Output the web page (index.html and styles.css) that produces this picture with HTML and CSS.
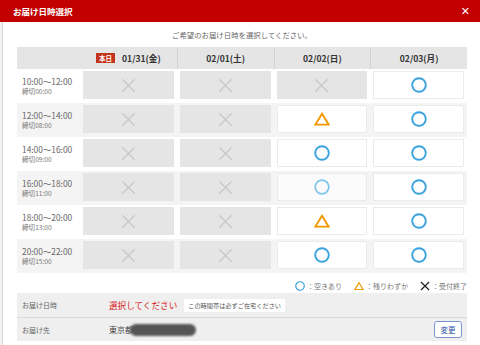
FILE: index.html
```html
<!DOCTYPE html>
<html lang="ja">
<head>
    <meta charset="UTF-8">
    <title>お届け日時選択</title>
    <link rel="stylesheet" href="styles.css">
</head>
<body>
    <svg class="defs" width="0" height="0">
        <symbol id="ic-x" viewBox="0 0 16 16"><path d="M1.5 1.5L14.5 14.5M14.5 1.5L1.5 14.5" stroke="#c4c4c4" stroke-width="1.4" fill="none"/></symbol>
        <symbol id="ic-o" viewBox="0 0 16 16"><circle cx="8" cy="8" r="6.8" fill="none" stroke="#3aa2de" stroke-width="1.9"/></symbol>
        <symbol id="ic-o-light" viewBox="0 0 16 16"><circle cx="8" cy="8" r="6.8" fill="none" stroke="#7fc4e9" stroke-width="1.7"/></symbol>
        <symbol id="ic-t" viewBox="0 0 16 14"><path d="M8 1.8L14.6 12.6H1.4Z" fill="none" stroke="#f39800" stroke-width="1.9"/></symbol>
        <symbol id="ic-x-black" viewBox="0 0 16 16"><path d="M1.5 1.5L14.5 14.5M14.5 1.5L1.5 14.5" stroke="#222" stroke-width="2" fill="none"/></symbol>
    </svg>

    <div class="titlebar">
        <span class="title">お届け日時選択</span>
        <span class="close">✕</span>
    </div>

    <div class="modal">
        <p class="lead">ご希望のお届け日時を選択してください。</p>

        <div class="grid head">
            <div class="th"></div>
            <div class="th date"><span class="today">本日</span>01/31(金)</div>
            <div class="th date sep">02/01(土)</div>
            <div class="th date sep">02/02(日)</div>
            <div class="th date sep">02/03(月)</div>
        </div>

        <div class="grid row">
            <div class="time"><span>10:00～12:00</span><small>締切00:00</small></div>
            <div class="slot off"><svg class="x"><use href="#ic-x"/></svg></div>
            <div class="slot off"><svg class="x"><use href="#ic-x"/></svg></div>
            <div class="slot off"><svg class="x"><use href="#ic-x"/></svg></div>
            <div class="slot"><svg class="o"><use href="#ic-o"/></svg></div>
        </div>
        <div class="grid row alt">
            <div class="time"><span>12:00～14:00</span><small>締切08:00</small></div>
            <div class="slot off"><svg class="x"><use href="#ic-x"/></svg></div>
            <div class="slot off"><svg class="x"><use href="#ic-x"/></svg></div>
            <div class="slot"><svg class="t"><use href="#ic-t"/></svg></div>
            <div class="slot"><svg class="o"><use href="#ic-o"/></svg></div>
        </div>
        <div class="grid row">
            <div class="time"><span>14:00～16:00</span><small>締切09:00</small></div>
            <div class="slot off"><svg class="x"><use href="#ic-x"/></svg></div>
            <div class="slot off"><svg class="x"><use href="#ic-x"/></svg></div>
            <div class="slot"><svg class="o"><use href="#ic-o"/></svg></div>
            <div class="slot"><svg class="o"><use href="#ic-o"/></svg></div>
        </div>
        <div class="grid row alt">
            <div class="time"><span>16:00～18:00</span><small>締切11:00</small></div>
            <div class="slot off"><svg class="x"><use href="#ic-x"/></svg></div>
            <div class="slot off"><svg class="x"><use href="#ic-x"/></svg></div>
            <div class="slot hover"><svg class="o"><use href="#ic-o-light"/></svg></div>
            <div class="slot"><svg class="o"><use href="#ic-o"/></svg></div>
        </div>
        <div class="grid row">
            <div class="time"><span>18:00～20:00</span><small>締切13:00</small></div>
            <div class="slot off"><svg class="x"><use href="#ic-x"/></svg></div>
            <div class="slot off"><svg class="x"><use href="#ic-x"/></svg></div>
            <div class="slot"><svg class="t"><use href="#ic-t"/></svg></div>
            <div class="slot"><svg class="o"><use href="#ic-o"/></svg></div>
        </div>
        <div class="grid row alt">
            <div class="time"><span>20:00～22:00</span><small>締切15:00</small></div>
            <div class="slot off"><svg class="x"><use href="#ic-x"/></svg></div>
            <div class="slot off"><svg class="x"><use href="#ic-x"/></svg></div>
            <div class="slot"><svg class="o"><use href="#ic-o"/></svg></div>
            <div class="slot"><svg class="o"><use href="#ic-o"/></svg></div>
        </div>

        <div class="legend">
            <span class="item"><svg class="lg"><use href="#ic-o"/></svg>：空きあり</span>
            <span class="item"><svg class="lg"><use href="#ic-t"/></svg>：残りわずか</span>
            <span class="item"><svg class="lg"><use href="#ic-x-black"/></svg>：受付終了</span>
        </div>

        <div class="info">
            <div class="info-row">
                <div class="label">お届け日時</div>
                <div class="value">
                    <span class="pick">選択してください</span>
                    <span class="note">この時間帯は必ずご在宅ください</span>
                </div>
            </div>
            <div class="info-row">
                <div class="label">お届け先</div>
                <div class="value">
                    <span class="addr">東京都</span><span class="masked"></span>
                    <button class="change">変更</button>
                </div>
            </div>
        </div>
    </div>
</body>
</html>
```

FILE: styles.css
```css
* {
    margin: 0;
    padding: 0;
    box-sizing: border-box;
}

body {
    font-family: "Noto Sans CJK JP", "Noto Sans", sans-serif;
    background-color: #f3f3f3;
    width: 480px;
    height: 345px;
    overflow: hidden;
}

.defs {
    position: absolute;
}

.titlebar {
    height: 22px;
    background-color: #c20000;
    color: #fff;
    display: flex;
    align-items: center;
    justify-content: space-between;
    padding: 0 10px 0 13px;
}

.title {
    font-size: 8.5px;
    font-weight: bold;
}

.close {
    font-size: 11px;
    font-weight: bold;
    font-family: "DejaVu Sans", sans-serif;
}

.modal {
    margin-left: 2px;
    border-left: 1px solid #d6d6d6;
    background-color: #fff;
    height: 323px;
    padding: 6px 0 0 14px;
}

.lead {
    width: 450px;
    text-align: center;
    font-size: 7.4px;
    line-height: 13px;
    color: #666;
    margin-bottom: 6px;
}

.grid {
    display: grid;
    grid-template-columns: 63px repeat(4, 1fr);
    width: 450px;
}

.head {
    height: 22px;
    background-color: #e5e5e5;
}

.th {
    display: flex;
    align-items: center;
    justify-content: center;
    font-size: 8.6px;
    font-weight: bold;
    color: #333;
}

.th.sep {
    border-left: 1px solid #d0d0d0;
}

.today {
    background-color: #c3341c;
    color: #fff;
    font-size: 6.5px;
    padding: 0 3px;
    line-height: 10px;
    margin-right: 7px;
}

.row {
    height: 34px;
}

.row.alt {
    background-color: #f4f4f4;
}

.time {
    display: flex;
    flex-direction: column;
    justify-content: center;
    padding: 0 0 1px 5px;
    color: #666;
}

.time span {
    font-size: 8.4px;
    line-height: 11px;
}

.time small {
    font-size: 6.6px;
    line-height: 9px;
    color: #777;
}

.slot {
    margin: 2px 3px 4px;
    background-color: #fff;
    border: 1px solid #ebebeb;
    display: flex;
    align-items: center;
    justify-content: center;
}

.slot.off {
    background-color: #e5e5e5;
    border-color: #e5e5e5;
}

.slot.hover {
    background-color: #fbfbfb;
}

.x {
    width: 15px;
    height: 15px;
}

.o {
    width: 16px;
    height: 16px;
}

.t {
    width: 16px;
    height: 14px;
}

.legend {
    width: 450px;
    display: flex;
    justify-content: flex-end;
    gap: 12px;
    margin-top: 6px;
    height: 14px;
    font-size: 7px;
    color: #777;
}

.item {
    display: flex;
    align-items: center;
}

.lg {
    width: 10px;
    height: 10px;
    margin-right: 2px;
}

.info {
    width: 450px;
    background-color: #efefef;
}

.info-row {
    display: flex;
    align-items: center;
    height: 24px;
}

.info-row + .info-row {
    border-top: 1px solid #dadada;
}

.label {
    width: 92px;
    padding-left: 5px;
    font-size: 7px;
    color: #666;
}

.value {
    flex: 1;
    display: flex;
    align-items: center;
    padding-right: 5px;
}

.pick {
    font-size: 8.6px;
    color: #d71a1a;
    margin-right: 7px;
}

.note {
    background-color: #fff;
    font-size: 6.2px;
    color: #555;
    padding: 2px 4px;
    line-height: 9px;
}

.addr {
    font-size: 8px;
    color: #444;
}

.masked {
    width: 66px;
    height: 12px;
    margin-left: -3px;
    border-radius: 6px;
    background-color: #555;
    filter: blur(0.8px);
}

.change {
    margin-left: auto;
    font-family: inherit;
    font-size: 7.5px;
    color: #2a4f9e;
    background-color: #fff;
    border: 1px solid #7b93d1;
    border-radius: 3px;
    width: 28px;
    height: 17px;
}
```
